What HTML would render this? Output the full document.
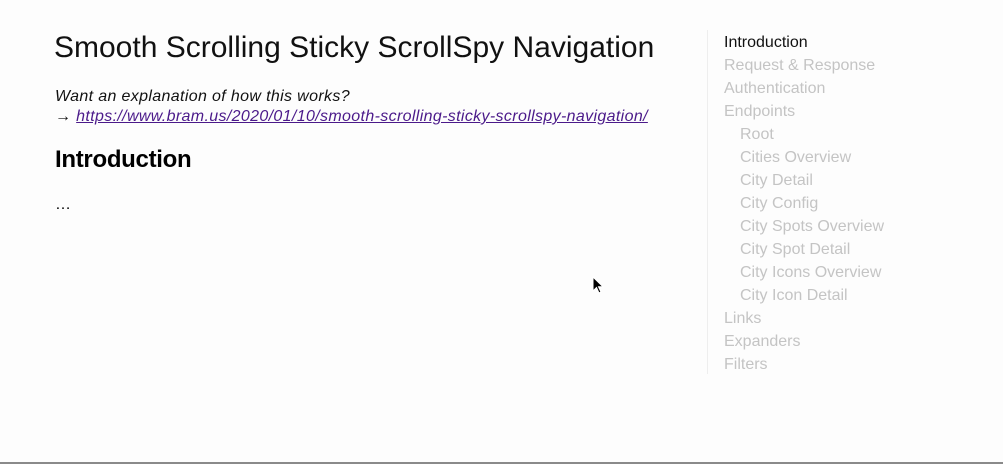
<!DOCTYPE html>
<html><head><meta charset="utf-8"><style>
html,body{margin:0;padding:0;}
body{width:1003px;height:464px;background:#fdfdfd;font-family:"Liberation Sans",sans-serif;position:relative;overflow:hidden;}
.bot{position:absolute;left:0;right:0;top:462px;height:2px;background:#8a8a8a;}
h1{position:absolute;left:54px;top:28px;margin:0;font-size:30px;font-weight:300;color:#111;letter-spacing:0px;white-space:nowrap;line-height:40px;}
.p{position:absolute;left:55px;top:87px;font-size:16px;line-height:20px;font-style:italic;color:#111;letter-spacing:0.35px;}
.p a{color:#4b1a8a;text-decoration:underline;}
h2{position:absolute;left:55px;top:145px;margin:0;font-size:24px;font-weight:bold;color:#000;line-height:30px;letter-spacing:-0.3px;}
.d{position:absolute;left:55px;top:196px;font-size:16px;}
nav{position:absolute;left:707px;top:30px;height:344px;border-left:1px solid #eee;}
nav div{position:absolute;left:16px;font-size:16px;color:#c4c4c4;white-space:nowrap;line-height:20px;}
nav div.s{left:32px;}
nav div.a{color:#111;}
</style></head><body>
<h1>Smooth Scrolling Sticky ScrollSpy Navigation</h1>
<div class="p">Want an explanation of how this works?<br>→ <a>https://www.bram.us/2020/01/10/smooth-scrolling-sticky-scrollspy-navigation/</a></div>
<h2>Introduction</h2>
<div class="d">…</div>
<nav>
<div class="a" style="top:3px">Introduction</div>
<div style="top:26px">Request &amp; Response</div>
<div style="top:49px">Authentication</div>
<div style="top:72px">Endpoints</div>
<div class="s" style="top:95px">Root</div>
<div class="s" style="top:118px">Cities Overview</div>
<div class="s" style="top:141px">City Detail</div>
<div class="s" style="top:164px">City Config</div>
<div class="s" style="top:187px">City Spots Overview</div>
<div class="s" style="top:210px">City Spot Detail</div>
<div class="s" style="top:233px">City Icons Overview</div>
<div class="s" style="top:256px">City Icon Detail</div>
<div style="top:279px">Links</div>
<div style="top:302px">Expanders</div>
<div style="top:325px">Filters</div>
</nav>
<svg style="position:absolute;left:592px;top:276px" width="12" height="20" viewBox="0 0 12 20"><path d="M1 1 L1 15 L4.5 11.5 L7 17 L9 16 L6.5 10.8 L11 10.8 Z" fill="#000" stroke="#fff" stroke-width="1"/></svg>
<div class="bot"></div>
</body></html>
